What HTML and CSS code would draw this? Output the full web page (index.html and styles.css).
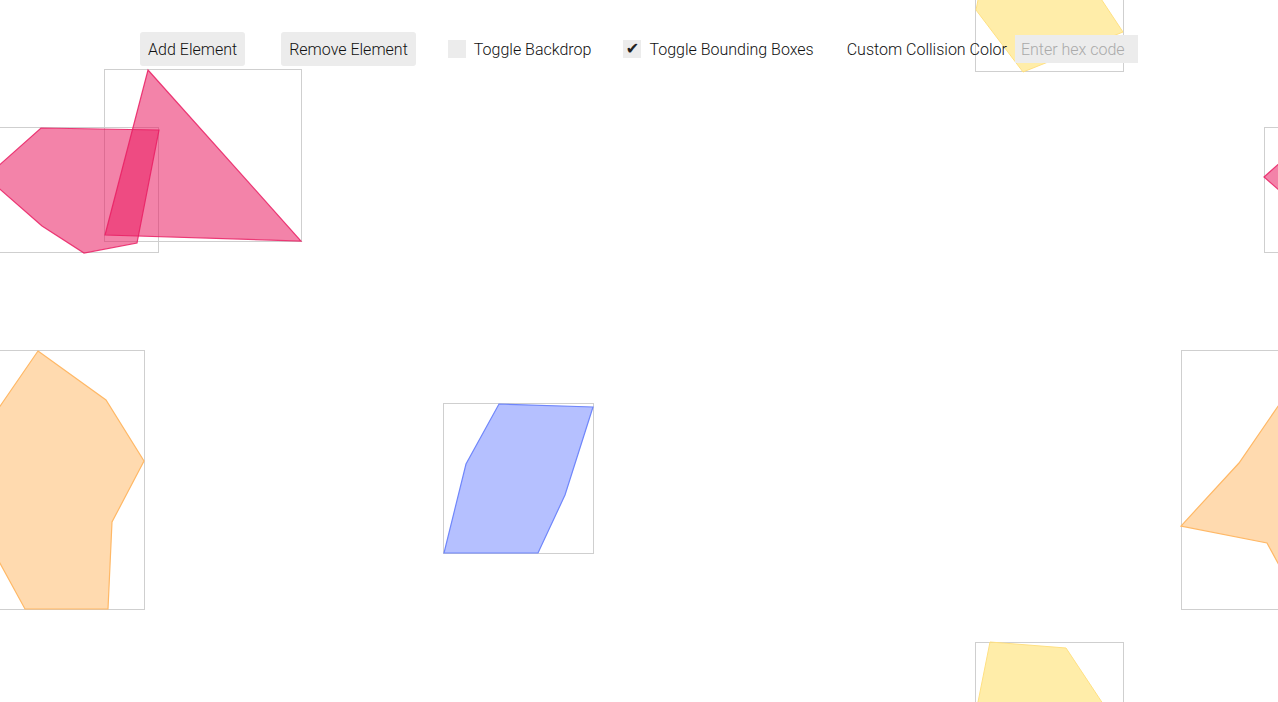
FILE: index.html
```html
<!DOCTYPE html>
<html>
<head>
<meta charset="utf-8">
<link rel="stylesheet" href="styles.css">
</head>
<body>
<div class="stage">
  <svg class="canvas" width="1278" height="702" viewBox="0 0 1278 702">
    <g class="box">
      <rect x="-13.5" y="127.5" width="172" height="125"/>
      <rect x="1264.5" y="127.5" width="172" height="125"/>
      <rect x="104.5" y="69.5" width="197" height="172"/>
      <rect x="-96.5" y="350.5" width="241" height="259"/>
      <rect x="1181.5" y="350.5" width="241" height="259"/>
      <rect x="443.5" y="403.5" width="150" height="150"/>
      <rect x="975.5" y="-59.5" width="148" height="131"/>
      <rect x="975.5" y="642.5" width="148" height="131"/>
    </g>
    <g class="pink">
      <polygon points="-14,177 41,128 159,130 137,243 84,253 42,226"/>
      <polygon transform="translate(1278 0)" points="-14,177 41,128 159,130 137,243 84,253 42,226"/>
      <polygon points="148,70 301,241 105,235"/>
    </g>
    <g class="orange">
      <polygon points="38,351 106,400 144,461 112,522 108,609 25,609 -11,543 -97,526 -39,463"/>
      <polygon transform="translate(1278 0)" points="38,351 106,400 144,461 112,522 108,609 25,609 -11,543 -97,526 -39,463"/>
    </g>
    <g class="blue">
      <polygon points="499,404 593,407 565,495 538,553 444,553 466,464"/>
    </g>
    <g class="yellow">
      <polygon points="990,642 1066,648 1123,734 1023,774 976,712"/>
      <polygon transform="translate(0 -702)" points="990,642 1066,648 1123,734 1023,774 976,712"/>
    </g>
  </svg>
  <div class="toolbar">
    <button class="btn btn-first">Add Element</button>
    <button class="btn">Remove Element</button>
    <label class="toggle"><span class="check"></span>Toggle Backdrop</label>
    <label class="toggle"><span class="check">✔</span>Toggle Bounding Boxes</label>
    <label class="color">Custom Collision Color<input class="hex" type="text" placeholder="Enter hex code"></label>
  </div>
</div>
</body>
</html>
```

FILE: styles.css
```css
html, body {
  margin: 0;
  padding: 0;
  background: #fff;
  overflow: hidden;
}
body {
  font-family: Roboto, "Liberation Sans", sans-serif;
  font-size: 16px;
  font-weight: 300;
  color: #111;
}
.stage {
  position: relative;
  width: 1278px;
  height: 702px;
  overflow: hidden;
}
.canvas {
  position: absolute;
  left: 0;
  top: 0;
}
.box rect {
  fill: none;
  stroke: #cfcfcf;
  stroke-width: 1;
}
.pink polygon {
  fill: #e91e63;
  fill-opacity: 0.55;
  stroke: #e91e63;
  stroke-opacity: 0.85;
  stroke-width: 1.2;
}
.orange polygon {
  fill: #ffa640;
  fill-opacity: 0.42;
  stroke: #ffb866;
  stroke-width: 1.2;
}
.blue polygon {
  fill: #3d5afe;
  fill-opacity: 0.38;
  stroke: #6f86fb;
  stroke-width: 1.2;
}
.yellow polygon {
  fill: #ffd740;
  fill-opacity: 0.45;
  stroke: #ffe082;
  stroke-width: 1;
}
.toolbar {
  position: relative;
  display: flex;
  justify-content: center;
  align-items: center;
  gap: 32px;
  padding-top: 32px;
  height: 34px;
}
.btn {
  font-family: inherit;
  font-size: 16px;
  font-weight: 300;
  color: #111;
  background: #ececec;
  border: none;
  border-radius: 3px;
  height: 34px;
  padding: 0 8px;
  margin: 0;
}
.btn-first {
  margin-right: 4px;
}
.toggle {
  display: flex;
  align-items: center;
  gap: 8px;
}
.check {
  width: 18px;
  height: 18px;
  background: #ececec;
  display: flex;
  align-items: center;
  justify-content: center;
  font-size: 16px;
  font-family: "DejaVu Sans", sans-serif;
  font-weight: 400;
  color: #222;
  line-height: 1;
}
.color {
  display: flex;
  align-items: center;
  gap: 8px;
  margin-left: 1px;
}
.hex {
  font-family: inherit;
  font-size: 16px;
  font-weight: 300;
  width: 123px;
  height: 28px;
  box-sizing: border-box;
  padding: 0 6px;
  border: none;
  background: #ececec;
  color: #222;
  outline: none;
}
.hex::placeholder {
  color: #aaa;
}
```
